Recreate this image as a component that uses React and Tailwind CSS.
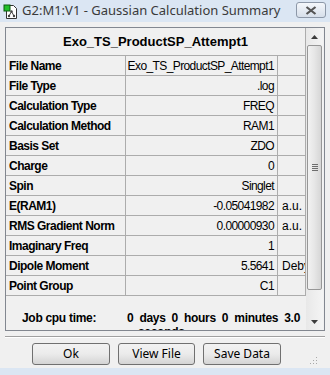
import React from 'react';

const rows = [
  ['File Name', 'Exo_TS_ProductSP_Attempt1', ''],
  ['File Type', '.log', ''],
  ['Calculation Type', 'FREQ', ''],
  ['Calculation Method', 'RAM1', ''],
  ['Basis Set', 'ZDO', ''],
  ['Charge', '0', ''],
  ['Spin', 'Singlet', ''],
  ['E(RAM1)', '-0.05041982', 'a.u.'],
  ['RMS Gradient Norm', '0.00000930', 'a.u.'],
  ['Imaginary Freq', '1', ''],
  ['Dipole Moment', '5.5641', 'Debye'],
  ['Point Group', 'C1', ''],
];

const AppIcon = () => (
  <svg width="16" height="16" viewBox="0 0 16 16">
    <path d="M3.5 1.5h7l3 3v10h-10z" fill="#fff" stroke="#333" />
    <rect x="1" y="1" width="6" height="6" fill="#22c02a" stroke="#0b5a10" />
    <circle cx="8.5" cy="7.5" r="1.2" fill="#444" />
    <circle cx="6" cy="12" r="1.2" fill="#444" />
    <circle cx="11" cy="12" r="1.2" fill="#444" />
    <path d="M8.5 7.5L6 12M8.5 7.5L11 12" stroke="#444" />
  </svg>
);

const WinButton = ({ label, width }) => (
  <button
    className={`h-[22px] ${width} rounded-[3px] border border-[#707070] bg-gradient-to-b from-[#f2f2f2] via-[#ebebeb] to-[#d4d4d4] text-[12px] text-black leading-none`}
  >
    {label}
  </button>
);

export default function App() {
  return (
    <div
      className="relative w-[330px] h-[375px] overflow-hidden bg-[#f0f0f0]"
      style={{ fontFamily: '"Liberation Sans", Arial, sans-serif' }}
    >
      {/* title bar */}
      <div className="h-[22px] bg-[#dbe6f3] flex items-center">
        <div className="ml-[3px] mt-[1px]">
          <AppIcon />
        </div>
        <span
          className="ml-[3px] text-[13px] text-[#3a3a3a]"
          style={{ fontFamily: '"Noto Sans", "Open Sans", sans-serif' }}
        >
          G2:M1:V1 - Gaussian Calculation Summary
        </span>
        <div className="ml-auto mr-[4px] mt-[-2px] w-[30px] h-[16px] rounded-[3px] border border-[#8d98a8] bg-gradient-to-b from-[#f4f7fb] to-[#d7dfea] flex items-center justify-center">
          <svg width="12" height="9" viewBox="0 0 12 9">
            <path d="M1.5 1l9 7M10.5 1l-9 7" stroke="#555" strokeWidth="2.2" />
          </svg>
        </div>
      </div>

      {/* panel */}
      <div className="ml-[5px] mt-[5px] w-[320px] h-[304px] border border-[#828790] bg-[#f0f0f0] flex overflow-hidden">
        <div className="w-[300px] shrink-0 overflow-hidden">
          <div className="h-[28px] border-b border-r border-[#acacac] flex items-center justify-center text-[13px] font-bold text-black">
            Exo_TS_ProductSP_Attempt1
          </div>
          {rows.map(([label, value, unit]) => (
            <div key={label} className="h-[20px] flex border-b border-[#acacac]">
              <div className="w-[120px] shrink-0 border-r border-[#acacac] pl-[3px] flex items-center text-[12px] font-bold tracking-[-0.5px] text-black whitespace-nowrap overflow-hidden">
                {label}
              </div>
              <div className="w-[152px] shrink-0 border-r border-[#acacac] pr-[3px] flex items-center justify-end text-[12px] text-black tracking-[-0.6px] whitespace-nowrap overflow-hidden">
                {value}
              </div>
              <div className="w-[28px] shrink-0 border-r border-[#acacac] pl-[4px] flex items-center text-[12px] text-black whitespace-nowrap overflow-hidden">
                {unit}
              </div>
            </div>
          ))}
          <div className="flex pt-[15px] pl-[16px] text-[12px] font-bold text-black leading-[14px] tracking-[-0.3px]">
            <span className="w-[105px] shrink-0">Job cpu time:</span>
            <div className="whitespace-nowrap">
              <div style={{ wordSpacing: '3px' }}>0 days  0 hours  0 minutes  3.0</div>
              <div className="pl-[11px]">seconds</div>
            </div>
          </div>
        </div>

        {/* scrollbar */}
        <div className="w-[17px] shrink-0 bg-gradient-to-r from-[#e8e8e8] to-[#f4f4f4] flex flex-col items-center">
          <div className="h-[17px] w-full flex items-center justify-center">
            <svg width="7" height="4" viewBox="0 0 7 4">
              <path d="M0 4L3.5 0L7 4z" fill="#3c3c3c" />
            </svg>
          </div>
          <div className="w-[15px] h-[245px] rounded-[2px] border border-[#979797] bg-gradient-to-r from-[#f2f2f2] via-[#e6e6e6] to-[#d6d6d6] flex flex-col items-center justify-center gap-[1px]">
            <div className="w-[6px] h-[1px] bg-[#6d6d6d]" />
            <div className="w-[6px] h-[1px] bg-[#6d6d6d]" />
            <div className="w-[6px] h-[1px] bg-[#6d6d6d]" />
            <div className="w-[6px] h-[1px] bg-[#6d6d6d]" />
          </div>
          <div className="flex-1" />
          <div className="h-[17px] w-full flex items-center justify-center">
            <svg width="7" height="4" viewBox="0 0 7 4">
              <path d="M0 0L3.5 4L7 0z" fill="#3c3c3c" />
            </svg>
          </div>
        </div>
      </div>

      {/* separator */}
      <div className="mt-[5px] mx-[5px] h-[2px] border-t border-[#a0a0a0] border-b-white border-b" />

      {/* buttons */}
      <div
        className="mt-[5px] flex pl-[32px] gap-[8px]"
        style={{ fontFamily: '"Noto Sans", "Open Sans", sans-serif' }}
      >
        <WinButton label="Ok" width="w-[78px]" />
        <WinButton label="View File" width="w-[77px]" />
        <WinButton label="Save Data" width="w-[78px]" />
      </div>

      {/* resize grip */}
      <div className="absolute right-[12px] bottom-[10px]">
        <svg width="8" height="8" viewBox="0 0 8 8">
          <rect x="6" y="0" width="1" height="1" fill="#a8a8a8" />
          <rect x="3" y="3" width="1" height="1" fill="#a8a8a8" />
          <rect x="6" y="3" width="1" height="1" fill="#a8a8a8" />
          <rect x="0" y="6" width="1" height="1" fill="#a8a8a8" />
          <rect x="3" y="6" width="1" height="1" fill="#a8a8a8" />
          <rect x="6" y="6" width="1" height="1" fill="#a8a8a8" />
        </svg>
      </div>

      {/* bottom frame */}
      <div className="absolute left-0 right-0 bottom-0 h-[7px] bg-[#dbe6f3]" />
    </div>
  );
}
